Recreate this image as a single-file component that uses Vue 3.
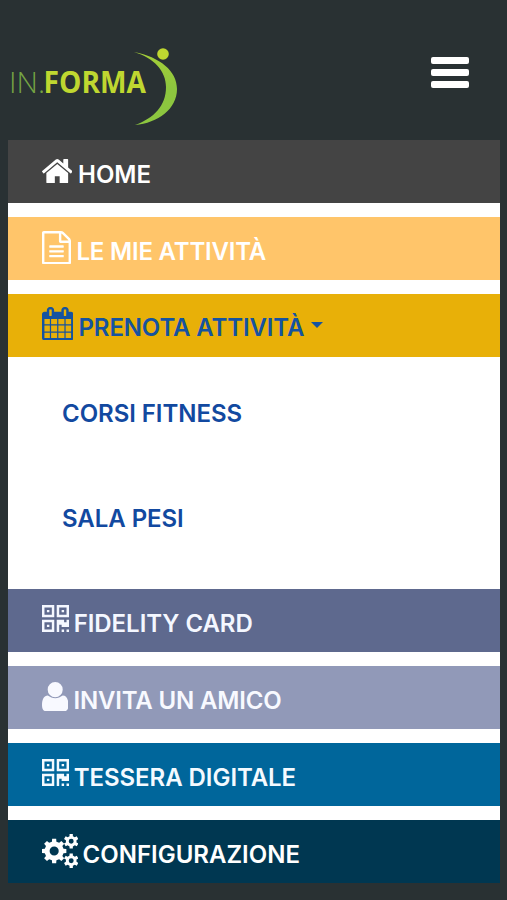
<script setup>
/*
  Menu principale mobile: intestazione con logo e pulsante hamburger,
  voci colorate a tutta larghezza e sottomenu di prenotazione.
*/
import { ref } from 'vue'

const menuOpen = ref(true)
const subOpen = ref(true)

// ruota dentata: n denti, raggio esterno/interno, foro centrale
function gear(cx, cy, n, outer, inner, hole) {
  const pts = []
  const step = (Math.PI * 2) / n
  const corners = [[-0.3, inner], [-0.21, outer], [0.21, outer], [0.3, inner]]
  for (let i = 0; i < n; i++) {
    for (const [k, r] of corners) {
      const a = (i + k) * step
      pts.push(`${(cx + r * Math.sin(a)).toFixed(1)} ${(cy - r * Math.cos(a)).toFixed(1)}`)
    }
  }
  return `M${pts.join('L')}ZM${cx - hole} ${cy}a${hole} ${hole} 0 1 0 ${hole * 2} 0a${hole} ${hole} 0 1 0 ${-hole * 2} 0Z`
}

const icons = {
  home: {
    box: '89 253 1614 1283',
    d: 'M1472 992v480q0 26-19 45t-45 19h-384v-384h-256v384h-384q-26 0-45-19t-19-45v-480q0-1 .5-3t.5-3l575-474 575 474q1 2 1 6zm223-69l-62 74q-8 9-21 11h-3q-13 0-21-7l-692-577-692 577q-12 8-24 7-13-2-21-11l-62-74q-8-10-7-23.5t11-21.5l719-599q32-26 76-26t76 26l244 204v-195q0-14 9-23t23-9h192q14 0 23 9t9 23v408l219 182q10 8 11 21.5t-7 23.5z',
  },
  file: {
    box: '128 0 1536 1792',
    d: 'M1596 380q28 28 48 76t20 88v1152q0 40-28 68t-68 28h-1344q-40 0-68-28t-28-68v-1600q0-40 28-68t68-28h896q40 0 88 20t76 48zm-444-244v376h376q-10-29-22-41l-313-313q-12-12-41-22zm384 1528v-1024h-416q-40 0-68-28t-28-68v-416h-768v1536h1280zm-1024-864q0-14 9-23t23-9h704q14 0 23 9t9 23v64q0 14-9 23t-23 9h-704q-14 0-23-9t-9-23v-64zm736 224q14 0 23 9t9 23v64q0 14-9 23t-23 9h-704q-14 0-23-9t-9-23v-64q0-14 9-23t23-9h704zm0 256q14 0 23 9t9 23v64q0 14-9 23t-23 9h-704q-14 0-23-9t-9-23v-64q0-14 9-23t23-9h704z',
  },
  calendar: {
    box: '64 0 1664 1792',
    d: 'M192 1664h288v-288h-288v288zm352 0h320v-288h-320v288zm-352-352h288v-320h-288v320zm352 0h320v-320h-320v320zm-352-384h288v-288h-288v288zm736 736h320v-288h-320v288zm-384-736h320v-288h-320v288zm768 736h288v-288h-288v288zm-384-352h320v-320h-320v320zm-352-864v-288q0-13-9.5-22.5t-22.5-9.5h-64q-13 0-22.5 9.5t-9.5 22.5v288q0 13 9.5 22.5t22.5 9.5h64q13 0 22.5-9.5t9.5-22.5zm736 864h288v-320h-288v320zm-384-384h320v-288h-320v288zm384 0h288v-288h-288v288zm32-480v-288q0-13-9.5-22.5t-22.5-9.5h-64q-13 0-22.5 9.5t-9.5 22.5v288q0 13 9.5 22.5t22.5 9.5h64q13 0 22.5-9.5t9.5-22.5zm384-64v1280q0 52-38 90t-90 38h-1408q-52 0-90-38t-38-90v-1280q0-52 38-90t90-38h128v-96q0-66 47-113t113-47h64q66 0 113 47t47 113v96h384v-96q0-66 47-113t113-47h64q66 0 113 47t47 113v96h128q52 0 90 38t38 90z',
  },
  qrcode: {
    box: '192 128 1408 1408',
    d: 'M576 1152v128h-128v-128h128zm0-768v128h-128v-128h128zm768 0v128h-128v-128h128zm-1024 1023h384v-383h-384v383zm0-767h384v-384h-384v384zm768 0h384v-384h-384v384zm-256 256v640h-640v-640h640zm512 512v128h-128v-128h128zm256 0v128h-128v-128h128zm0-512v384h-384v-128h-128v384h-128v-640h384v128h128v-128h128zm-768-768v640h-640v-640h640zm768 0v640h-640v-640h640z',
  },
  user: {
    box: '0 0 26.5 29.5',
    d: 'M13.2 0a7.5 7.5 0 0 1 7.5 7.7a7.5 7.5 0 0 1-15 0a7.5 7.5 0 0 1 7.5-7.7zM5.8 13.6c4.600 3.400 10.300 3.400 14.900 0c3.700 0 5.800 3.600 5.800 9.700c0 4.200-1.700 6.200-5.200 6.200h-16.100c-3.500 0-5.200-2-5.200-6.200c0-6.100 2.100-9.700 5.800-9.700z',
  },
  cogs: {
    box: '-64 0 1920 1792',
    d: gear(576, 896, 8, 650, 505, 240) + gear(1472, 384, 6, 395, 285, 130) + gear(1472, 1408, 6, 395, 285, 130),
  },
}

const items = [
  { id: 'home', icon: 'home', label: 'HOME' },
  { id: 'attivita', icon: 'file', label: 'LE MIE ATTIVITÀ' },
  { id: 'prenota', icon: 'calendar', label: 'PRENOTA ATTIVITÀ', children: ['CORSI FITNESS', 'SALA PESI'] },
  { id: 'fidelity', icon: 'qrcode', label: 'FIDELITY CARD' },
  { id: 'invita', icon: 'user', label: 'INVITA UN AMICO' },
  { id: 'tessera', icon: 'qrcode', label: 'TESSERA DIGITALE' },
  { id: 'config', icon: 'cogs', label: 'CONFIGURAZIONE' },
]

function select(item) {
  if (item.children) subOpen.value = !subOpen.value
}
</script>

<template>
  <div class="page">
    <header class="top">
      <svg class="logo" viewBox="0 0 180 90" role="img" aria-label="IN.FORMA">
        <defs>
          <linearGradient id="arc" x1="0" y1="0" x2="0" y2="1">
            <stop offset="0" stop-color="#a5cf38" />
            <stop offset="0.5" stop-color="#8dc63f" />
            <stop offset="1" stop-color="#8cc63f" />
          </linearGradient>
        </defs>
        <text class="logo-in" x="9" y="53" textLength="36" lengthAdjust="spacingAndGlyphs">IN.</text>
        <text class="logo-forma" x="43.5" y="53" textLength="102.5" lengthAdjust="spacingAndGlyphs">FORMA</text>
        <path fill="url(#arc)" d="M134 12C160 17 177 31 177 49C177 69 158 83 135 85C154 78 166 66 166 47C166 31 154 18 134 12Z" />
        <circle cx="163" cy="14" r="5.8" fill="#bfd730" />
      </svg>
      <button class="burger" aria-label="Menu" @click="menuOpen = !menuOpen">
        <span /><span /><span />
      </button>
    </header>

    <nav v-if="menuOpen" class="menu">
      <div v-for="item in items" :key="item.id" class="group">
        <a class="item" :class="`item-${item.id}`" @click="select(item)">
          <svg class="icon" :class="`icon-${item.icon}`" :viewBox="icons[item.icon].box" preserveAspectRatio="none">
            <path fill-rule="evenodd" :d="icons[item.icon].d" />
          </svg>
          <span class="label">{{ item.label }}</span>
          <span v-if="item.children" class="caret" />
        </a>
        <div v-if="item.children && subOpen" class="sub">
          <a v-for="child in item.children" :key="child" class="sub-item">{{ child }}</a>
        </div>
      </div>
    </nav>
  </div>
</template>

<style>
body { margin: 0; background: #293133; }
</style>

<style scoped>
.page {
  box-sizing: border-box; height: 900px; padding: 0 7px 0 8px; overflow: hidden;
  background: #293133; font-family: Inter, "Liberation Sans", sans-serif;
}

.top { display: flex; justify-content: space-between; height: 140px; }
.logo { width: 180px; height: 90px; margin: 40px 0 0 -8px; }
.logo-in { font: 300 29.5px "Open Sans", sans-serif; fill: #75a443; }
.logo-forma { font: 700 29.5px "Open Sans", sans-serif; fill: #bfd730; }
.burger {
  display: flex; flex-direction: column; gap: 5.2px; width: 38px; height: 32px;
  margin: 56.5px 31px 0 0; padding: 0; border: 0; background: none; cursor: pointer;
}
.burger span { height: 7.2px; border-radius: 2px; background: #fff; }

.menu { display: flex; flex-direction: column; gap: 13.7px; background: #fff; }
.item {
  display: flex; align-items: flex-start; box-sizing: border-box; height: 63.2px;
  padding-left: 33.5px; color: #fff; cursor: pointer;
}
.item-home { background: #444; }
.item-attivita { background: #ffc56a; letter-spacing: -0.2px; }
.item-prenota { background: #e8b008; color: #1553a0; letter-spacing: -0.13px; }
.item-fidelity { background: #5e698e; color: #f4f7ff; letter-spacing: -0.05px; }
.item-invita { background: #9199b8; color: #f8f9ff; letter-spacing: -0.17px; }
.item-tessera { background: #00669b; color: #f4faff; letter-spacing: -0.05px; }
.item-config { background: #003751; }

.icon { flex-shrink: 0; fill: currentColor; }
.icon-home { width: 30.5px; height: 24.5px; margin: 18.8px 6px 0 0; }
.icon-file { width: 29px; height: 33.5px; margin: 14px 6px 0 0; }
.icon-calendar { width: 31.5px; height: 33.5px; margin: 13px 5.5px 0 0; }
.icon-qrcode { width: 27px; height: 27px; margin: 16.5px 5.2px 0 0; }
.icon-user { width: 26.5px; height: 29.5px; margin: 16px 5.5px 0 0; }
.icon-cogs { width: 36.5px; height: 34px; margin: 14px 4.6px 0 0; }

.label, .sub-item { font-size: 24px; font-weight: 600; line-height: 30px; white-space: nowrap; }
.label { margin-top: 20px; }
.item-prenota .label { margin-top: 19.2px; }
.caret { margin: 28px 0 0 6.5px; border: 6.5px solid transparent; border-top-color: currentColor; border-bottom: 0; }

.sub {
  display: flex; flex-direction: column; gap: 75px; box-sizing: border-box; height: 218.3px;
  padding: 42px 0 0 54px; color: #1249a0; letter-spacing: -0.05px;
}
</style>
